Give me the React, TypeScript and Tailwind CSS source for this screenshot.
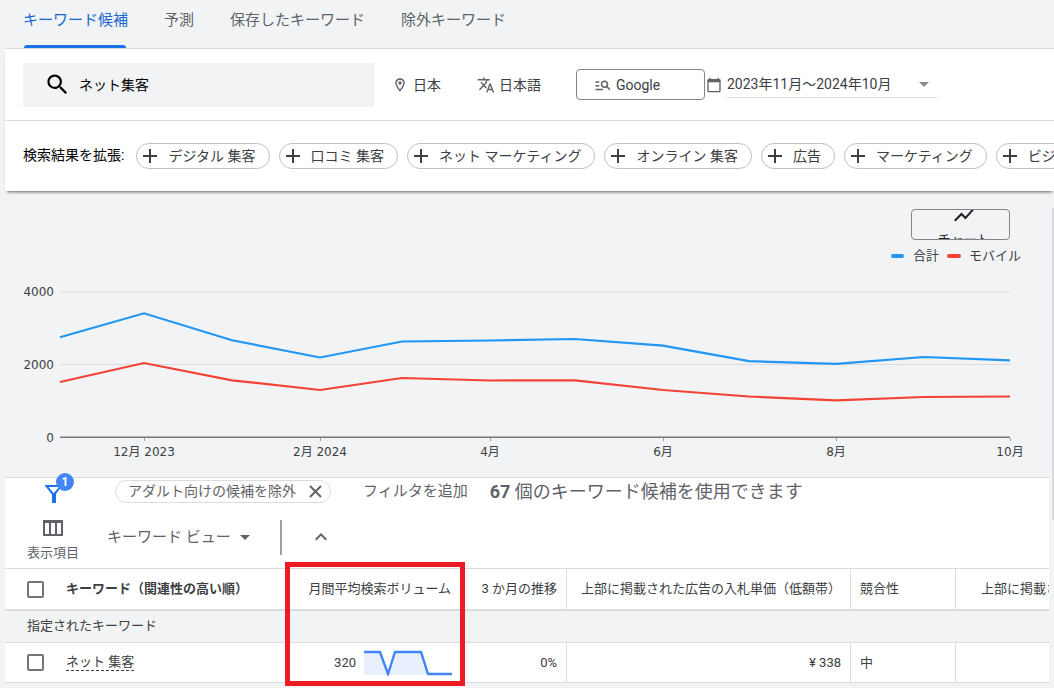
import React from "react";
import {
  MdArrowDropDown,
  MdCalendarToday,
  MdExpandLess,
  MdManageSearch,
  MdOutlineLocationOn,
  MdSearch,
  MdShowChart,
  MdTranslate,
} from "react-icons/md";

const tabs = ["キーワード候補", "予測", "保存したキーワード", "除外キーワード"];

const suggestions = [
  "デジタル 集客",
  "口コミ 集客",
  "ネット マーケティング",
  "オンライン 集客",
  "広告",
  "マーケティング",
  "ビジネス",
];

const totalPoints =
  "55,146.3 139,122.3 227,149.3 315,166.5 397,150.5 485,149.5 570,148 658,154.7 744,170.2 831,172.8 919,166 1005,169.3";
const mobilePoints =
  "55,191 139,172 227,189.3 315,199 397,187 485,189.5 570,189.3 658,199 744,205.5 831,209.4 919,206 1005,205.5";

const xLabels = [
  { x: 139, label: "12月 2023" },
  { x: 315, label: "2月 2024" },
  { x: 485, label: "4月" },
  { x: 658, label: "6月" },
  { x: 831, label: "8月" },
  { x: 1005, label: "10月" },
];

const yLabels = [
  { y: 101, label: "4000" },
  { y: 174, label: "2000" },
  { y: 247, label: "0" },
];

function Tabs() {
  return (
    <nav className="flex h-[49px] items-center gap-9 border-b border-[#dadce0] pb-2 pl-[18px] text-[15px]">
      {tabs.map((tab, i) => (
        <a
          key={tab}
          href="#"
          className={
            i === 0
              ? "relative whitespace-nowrap text-[#1967d2]"
              : "whitespace-nowrap text-[#5f6368]"
          }
        >
          {tab}
          {i === 0 && (
            <span className="absolute -bottom-[17px] left-px h-[3px] w-[102px] rounded-t bg-[#1a73e8]" />
          )}
        </a>
      ))}
    </nav>
  );
}

function SearchRow() {
  return (
    <div className="flex h-[72px] items-center border-b border-[#dadce0] bg-white pl-[18px] text-sm text-[#3c4043]">
      <label className="flex h-11 w-[351px] shrink-0 items-center bg-[#f1f3f4] pl-[21px] text-black">
        <MdSearch size={27} className="shrink-0" aria-hidden />
        <input
          aria-label="キーワード"
          defaultValue="ネット集客"
          className="ml-2 min-w-0 flex-1 bg-transparent outline-none"
        />
      </label>
      <button className="ml-[18px] flex items-center gap-[5px] whitespace-nowrap">
        <MdOutlineLocationOn size={16} className="text-[#5f6368]" />
        日本
      </button>
      <button className="ml-9 flex items-center gap-1 whitespace-nowrap">
        <MdTranslate size={18} className="text-[#5f6368]" />
        日本語
      </button>
      <button className="ml-[35px] flex h-[31px] w-[129px] shrink-0 items-center gap-1 rounded border border-[#80868b] pl-[17px]">
        <MdManageSearch size={18} className="text-[#5f6368]" />
        Google
      </button>
      <label className="flex items-center">
        <MdCalendarToday size={16} className="ml-px mr-[5px] shrink-0 text-[#5f6368]" />
        <span className="relative flex h-[27px] w-[210px] items-center border-b border-[#dadce0]">
          <select
            aria-label="期間"
            className="w-full appearance-none bg-transparent outline-none"
          >
            <option>2023年11月～2024年10月</option>
          </select>
          <MdArrowDropDown
            size={24}
            className="pointer-events-none absolute right-px text-[#8a8d91]"
          />
        </span>
      </label>
    </div>
  );
}

function Suggestions() {
  return (
    <div className="flex h-[70px] items-center overflow-hidden bg-white pb-0.5 pl-[18px] text-sm text-[#3c4043]">
      <span className="mr-3 shrink-0 whitespace-nowrap text-black">
        検索結果を拡張:
      </span>
      <div className="flex gap-[9px] pt-0.5">
        {suggestions.map((s) => (
          <button
            key={s}
            className="flex h-[26px] shrink-0 items-center gap-[11px] whitespace-nowrap rounded-full border border-[#bdc1c6] pl-1.5 pr-[13px]"
          >
            <svg width="14" height="14" viewBox="0 0 14 14" aria-hidden>
              <path d="M7 0v14M0 7h14" stroke="#3c4043" strokeWidth="2" />
            </svg>
            {s}
          </button>
        ))}
      </div>
    </div>
  );
}

function Chart() {
  return (
    <section className="relative h-[286px]">
      <div className="absolute right-11 top-[18px] z-10">
        <button className="flex h-[31px] w-[99px] flex-col items-center overflow-hidden rounded border border-[#80868b] pl-1.5 text-[13px] text-[#202124]">
          <MdShowChart size={24} className="-mt-[7px] shrink-0" />
          <span className="leading-[26px]">チャート</span>
        </button>
      </div>
      <div className="absolute right-[33px] top-[56px] z-10 flex items-center gap-2 text-[13px] leading-[18px] text-[#3c4043]">
        <span className="flex items-center gap-[9px]">
          <span className="h-1 w-[13px] rounded-sm bg-[#2196f3]" />
          合計
        </span>
        <span className="flex items-center gap-2">
          <span className="h-1 w-[14px] rounded-sm bg-[#f44336]" />
          モバイル
        </span>
      </div>
      <svg viewBox="0 0 1049 286" className="w-full" role="img" aria-label="検索ボリュームの推移">
        <path d="M55 101h950" stroke="#e6e8ea" strokeWidth="2" />
        <path d="M55 173.5h950" stroke="#dadce0" />
        <path d="M55 246.3h950" stroke="#75797c" strokeWidth="1.6" />
        {xLabels.map((t) => (
          <path key={t.x} d={`M${t.x + 0.5} 247v3`} stroke="#9aa0a6" />
        ))}
        <polyline points={totalPoints} fill="none" stroke="#2196f3" strokeWidth="2.2" />
        <polyline points={mobilePoints} fill="none" stroke="#f44336" strokeWidth="2.2" />
        <g fontSize="12" fill="#3c4043" className="font-['DejaVu_Sans','Noto_Sans_CJK_JP',sans-serif]">
          {yLabels.map((t) => (
            <text key={t.y} x="49" y={t.y + 4} textAnchor="end">
              {t.label}
            </text>
          ))}
          {xLabels.map((t) => (
            <text key={t.x} x={t.x} y="265" textAnchor="middle">
              {t.label}
            </text>
          ))}
        </g>
      </svg>
    </section>
  );
}

function Toolbar() {
  return (
    <div className="h-[91px] border-t border-[#dadce0] text-[#5f6368]">
      <div className="flex h-[26px] items-center whitespace-nowrap">
        <button aria-label="フィルタ" className="relative ml-10 h-6 w-[30px] shrink-0">
          <svg width="18" height="18" viewBox="0 0 18 18" className="mt-1.5" aria-hidden>
            <path
              fillRule="evenodd"
              d="M-.5 0h18L11 9v9H7V9.500zM3.500 2l5.200 6.200L14 2z"
              fill="#1a73e8"
            />
          </svg>
          <span className="absolute -top-1.5 left-[11px] flex size-[18px] items-center justify-center rounded-full bg-[#4285f4] text-xs font-bold text-white">
            1
          </span>
        </button>
        <span className="ml-10 flex h-[23px] shrink-0 items-center gap-[13px] rounded-full border border-[#dadce0] pl-3 pr-2 text-sm leading-5">
          アダルト向けの候補を除外
          <button aria-label="削除">
            <svg width="13" height="13" viewBox="0 0 13 13" aria-hidden>
              <path d="M1 1l11 11M12 1L1 12" stroke="#5f6368" strokeWidth="2" />
            </svg>
          </button>
        </span>
        <button className="ml-8 text-[15px]">フィルタを追加</button>
        <p className="ml-[22px] text-[18px]">
          <b>67</b> 個のキーワード候補を使用できます
        </p>
      </div>
      <div className="flex h-[66px] items-center">
        <button className="ml-[22px] flex w-[52px] shrink-0 flex-col items-center gap-2 whitespace-nowrap pt-2 text-[13px] leading-[18px]">
          <svg width="20" height="16" viewBox="0 0 20 16" aria-hidden>
            <path d="M1 1.500h18V15H1zM7 2v13M13 2v13" fill="none" stroke="#5f6368" strokeWidth="2" />
            <path d="M0 0h20v3H0z" fill="#5f6368" />
          </svg>
          表示項目
        </button>
        <label className="relative ml-7 flex items-center text-[15px]">
          <select
            aria-label="ビュー"
            className="w-[148px] appearance-none bg-transparent outline-none"
          >
            <option>キーワード ビュー</option>
          </select>
          <MdArrowDropDown size={24} className="pointer-events-none absolute -right-0.5" />
        </label>
        <span className="ml-[25px] h-[35px] w-0.5 bg-[#9aa0a6]" />
        <button aria-label="折りたたむ" className="ml-[27px]">
          <MdExpandLess size={24} />
        </button>
      </div>
    </div>
  );
}

const headCell =
  "h-[43px] border-b-2 border-t border-[#dadce0] py-0 font-normal whitespace-nowrap";
const bodyCell = "h-10 border-b border-[#dadce0] py-0 whitespace-nowrap";

function Checkbox({ label }: { label: string }) {
  return (
    <input
      type="checkbox"
      aria-label={label}
      className="block size-[17px] appearance-none rounded-[2px] border-2 border-[#757575] bg-white"
    />
  );
}

function KeywordTable() {
  return (
    <div className="relative">
      <div className="overflow-hidden">
        <table className="w-[1235px] table-fixed border-separate border-spacing-0 text-[13px] text-[#3c4043]">
          <colgroup>
            <col className="w-[61px]" />
            <col className="w-[219px]" />
            <col className="w-[179px]" />
            <col className="w-[103px]" />
            <col className="w-[284px]" />
            <col className="w-[105px]" />
            <col className="w-[284px]" />
          </colgroup>
          <thead>
            <tr>
              <th className={`${headCell} pl-[22px] text-left`}>
                <Checkbox label="すべて選択" />
              </th>
              <th className={`${headCell} text-left`}>
                <span className="font-bold">キーワード（関連性の高い順）</span>
              </th>
              <th className={`${headCell} pr-[13px] text-right`}>月間平均検索ボリューム</th>
              <th className={`${headCell} border-r pr-[9px] text-right`}>3 か月の推移</th>
              <th className={`${headCell} border-r pr-[9px] text-right`}>
                上部に掲載された広告の入札単価（低額帯）
              </th>
              <th className={`${headCell} border-r pl-[9px] text-left`}>競合性</th>
              <th className={`${headCell} pl-[25px] text-left`}>
                上部に掲載された広告の入札単価（高額帯）
              </th>
            </tr>
          </thead>
          <tbody>
            <tr>
              <td
                colSpan={7}
                className="h-8 border-b border-[#dadce0] bg-[#f1f3f4] py-0 pb-0.5 pl-[22px]"
              >
                指定されたキーワード
              </td>
            </tr>
            <tr>
              <td className={`${bodyCell} pl-[22px]`}>
                <Checkbox label="ネット 集客" />
              </td>
              <td className={`${bodyCell} pb-0.5`}>
                <span className="inline-block border-b border-dashed border-[#3c4043] leading-[17px]">
                  ネット 集客
                </span>
              </td>
              <td className={`${bodyCell} pr-3`}>
                <div className="flex items-center justify-end gap-2">
                  320
                  <svg width="88" height="26" viewBox="0 0 88 26" aria-hidden>
                    <path d="M0 2h16l8 22 8-22h25l7 22v1H0z" fill="#e8f0fe" />
                    <path
                      d="M0 2h16l8 22 7-22h26l7 22h24"
                      fill="none"
                      stroke="#4285f4"
                      strokeWidth="2.4"
                    />
                  </svg>
                </div>
              </td>
              <td className={`${bodyCell} border-r pr-[9px] text-right`}>0%</td>
              <td className={`${bodyCell} border-r pr-[9px] text-right`}>¥ 338</td>
              <td className={`${bodyCell} border-r pl-[9px]`}>中</td>
              <td className={bodyCell} />
            </tr>
          </tbody>
        </table>
      </div>
      <div className="pointer-events-none absolute -top-1.5 left-[280px] h-[124px] w-[180px] border-[5px] border-[#ed1c24]" />
    </div>
  );
}

export default function App() {
  return (
    <div className="relative min-h-screen overflow-hidden bg-[#f1f3f4] pl-[5px] font-[Roboto,'Noto_Sans_CJK_JP',sans-serif]">
      <Tabs />
      <div className="shadow-[0_3px_3px_-2px_rgba(0,0,0,0.6)]">
        <SearchRow />
        <Suggestions />
      </div>
      <Chart />
      <div className="mr-[5px] bg-white">
        <Toolbar />
        <KeywordTable />
      </div>
      <div className="absolute right-0 top-[208px] h-[312px] w-0.5 bg-[#dadce0]" />
    </div>
  );
}
